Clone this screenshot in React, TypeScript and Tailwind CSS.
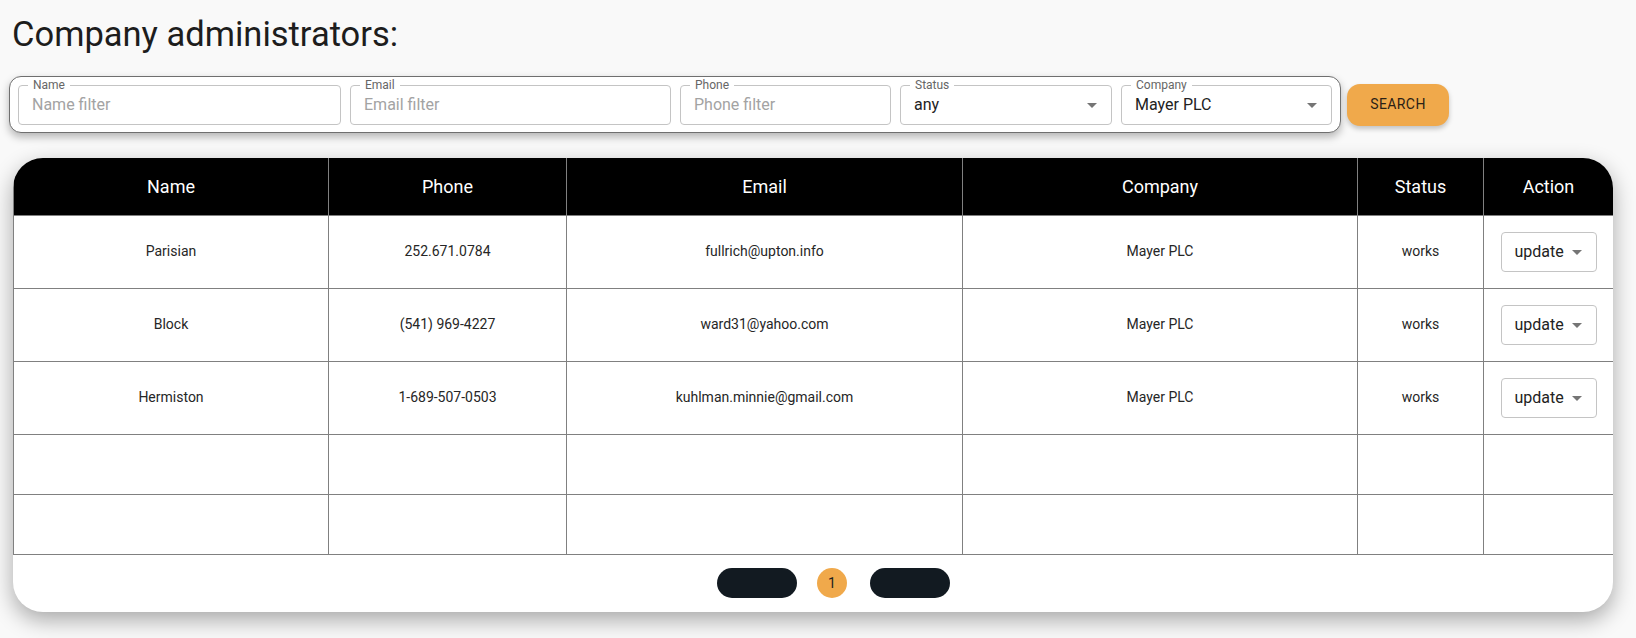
import React from "react";

type Admin = {
  name: string;
  phone: string;
  email: string;
  company: string;
  status: string;
};

const admins: Admin[] = [
  { name: "Parisian", phone: "252.671.0784", email: "fullrich@upton.info", company: "Mayer PLC", status: "works" },
  { name: "Block", phone: "(541) 969-4227", email: "ward31@yahoo.com", company: "Mayer PLC", status: "works" },
  { name: "Hermiston", phone: "1-689-507-0503", email: "kuhlman.minnie@gmail.com", company: "Mayer PLC", status: "works" },
];

const columns = [
  { label: "Name", width: "w-[315px]" },
  { label: "Phone", width: "w-[238px]" },
  { label: "Email", width: "w-[396px]" },
  { label: "Company", width: "w-[395px]" },
  { label: "Status", width: "w-[126px]" },
  { label: "Action", width: "w-[130px]" },
];

function Caret() {
  return (
    <svg width="24" height="24" viewBox="0 0 24 24" className="absolute right-[7px] top-1/2 -translate-y-1/2 fill-[#757575]">
      <path d="M7 10l5 5 5-5z" />
    </svg>
  );
}

function FieldLabel({ children }: { children: string }) {
  return (
    <span className="absolute -top-[8px] left-[9px] bg-white px-[5px] text-[12px] leading-[14px] text-[#666]">
      {children}
    </span>
  );
}

function TextFilter({ label, placeholder, width }: { label: string; placeholder: string; width: string }) {
  return (
    <div className={`relative h-[40px] shrink-0 rounded-[4px] border border-[#c4c4c4] ${width}`}>
      <FieldLabel>{label}</FieldLabel>
      <input
        placeholder={placeholder}
        className="h-full w-full bg-transparent px-[13px] text-[16px] text-[#222] outline-none placeholder:text-[#a3a3a3]"
      />
    </div>
  );
}

function SelectFilter({ label, value, width }: { label: string; value: string; width: string }) {
  return (
    <div className={`relative flex h-[40px] shrink-0 items-center rounded-[4px] border border-[#c4c4c4] px-[13px] ${width}`}>
      <FieldLabel>{label}</FieldLabel>
      <span className="text-[16px] text-[#222]">{value}</span>
      <Caret />
    </div>
  );
}

function ActionSelect() {
  return (
    <div className="relative mx-auto flex h-[40px] w-[96px] items-center rounded-[4px] border border-[#c4c4c4] pl-[13px]">
      <span className="text-[16px] text-[#222]">update</span>
      <Caret />
    </div>
  );
}

export default function App() {
  return (
    <div className="min-h-screen bg-[#f9f9f9] pt-[14px] font-['Roboto',sans-serif]">
      <h1 className="ml-[12px] text-[34.5px] leading-[40px] font-normal text-[#1d1d1d]">Company administrators:</h1>

      <div className="mt-[22px] ml-[9px] flex items-center gap-[6px]">
        <div className="flex h-[57px] w-[1332px] items-center gap-[9px] rounded-[12px] border border-[#6f6f6f] bg-white pl-[8px] shadow-[0_4px_8px_rgba(0,0,0,0.28)]">
          <TextFilter label="Name" placeholder="Name filter" width="w-[323px]" />
          <TextFilter label="Email" placeholder="Email filter" width="w-[321px]" />
          <TextFilter label="Phone" placeholder="Phone filter" width="w-[211px]" />
          <SelectFilter label="Status" value="any" width="w-[212px]" />
          <SelectFilter label="Company" value="Mayer PLC" width="w-[211px]" />
        </div>
        <button className="h-[42px] w-[102px] rounded-[13px] bg-[#f0a94b] text-[14px] font-normal tracking-[0.4px] text-[#2b2116] shadow-[0_3px_5px_rgba(0,0,0,0.22)]">
          SEARCH
        </button>
      </div>

      <div className="mt-[25px] ml-[13px] w-[1600px] overflow-hidden rounded-[30px] bg-white shadow-[0_8px_22px_rgba(0,0,0,0.33)]">
        <table className="w-full table-fixed border-collapse">
          <thead>
            <tr className="h-[57px]">
              {columns.map((col) => (
                <th
                  key={col.label}
                  className={`border-x border-[#808080] bg-black text-[18px] font-normal text-white ${col.width}`}
                >
                  {col.label}
                </th>
              ))}
            </tr>
          </thead>
          <tbody>
            {admins.map((row) => (
              <tr key={row.name} className="h-[73px] text-center text-[14px] text-[#262626]">
                <td className="border border-[#808080]">{row.name}</td>
                <td className="border border-[#808080]">{row.phone}</td>
                <td className="border border-[#808080]">{row.email}</td>
                <td className="border border-[#808080]">{row.company}</td>
                <td className="border border-[#808080]">{row.status}</td>
                <td className="border border-[#808080]">
                  <ActionSelect />
                </td>
              </tr>
            ))}
            {[0, 1].map((i) => (
              <tr key={`empty-${i}`} className="h-[60px]">
                {columns.map((col) => (
                  <td key={col.label} className="border border-[#808080]" />
                ))}
              </tr>
            ))}
          </tbody>
        </table>
        {/* pagination: prev / current page / next */}
        <div className="flex h-[57px] items-center justify-center pl-[41px]">
          <button className="h-[30px] w-[80px] rounded-full bg-[#121a21]" />
          <span className="ml-[20px] flex h-[30px] w-[30px] items-center justify-center rounded-full bg-[#f0a94b] text-[14px] text-[#1d1d1d]">
            1
          </span>
          <button className="ml-[23px] h-[30px] w-[80px] rounded-full bg-[#121a21]" />
        </div>
      </div>
    </div>
  );
}
